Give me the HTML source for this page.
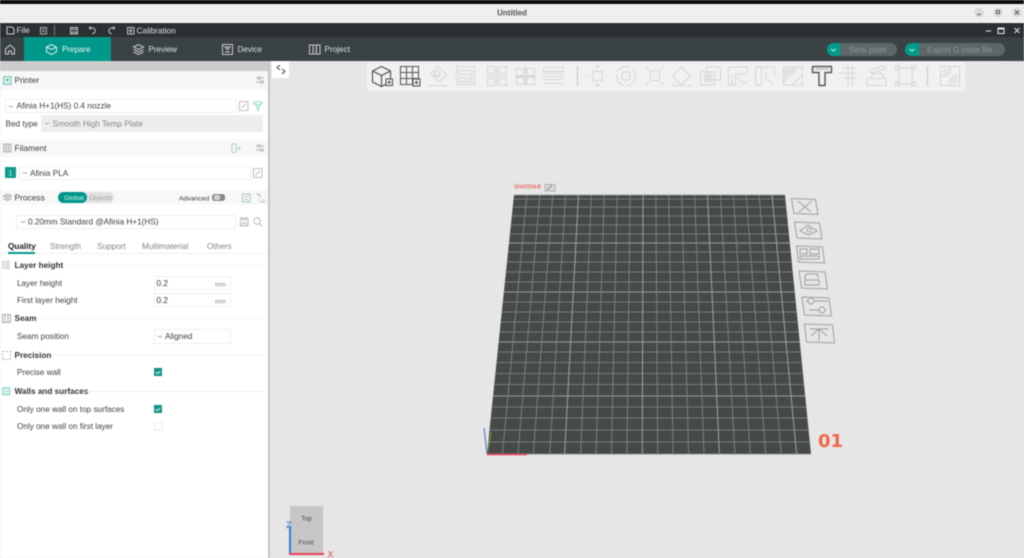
<!DOCTYPE html>
<html><head><meta charset="utf-8"><title>Untitled</title>
<style>
html,body{margin:0;padding:0;width:1024px;height:558px;overflow:hidden;background:#e6e6e6}
svg{position:absolute;left:0;top:0;display:block;filter:blur(.4px)}
text{font-family:"Liberation Sans",sans-serif;font-size:8.2px;fill:#404040}
.t{fill:#dce0e0}
.h{font-size:8.4px;fill:#3c3c3c}
.b{font-weight:bold;fill:#333}
.g{fill:#858585}
.l{fill:none;stroke:#d6d6d6;stroke-width:1}
.d{fill:none;stroke:#555;stroke-width:1}
.s{fill:none;stroke:#b0b0b0;stroke-width:1}
.m{fill:none;stroke:#9da2a2;stroke-width:1}
</style></head><body>
<svg width="1024" height="558" viewBox="0 0 1024 558" xmlns="http://www.w3.org/2000/svg">
<!-- window chrome -->
<rect width="1024" height="4" fill="#0a0a0a"/>
<rect y="4" width="1024" height="18" fill="#efefef"/>
<rect y="22" width="1024" height="1" fill="#fafafa"/>
<text x="512" y="15.5" text-anchor="middle" style="font-weight:bold;font-size:8px;fill:#555">Untitled</text>
<circle cx="979" cy="12.500" r="5" fill="#dcdcdc"/><circle cx="998" cy="12.500" r="5" fill="#dcdcdc"/><circle cx="1017" cy="12.500" r="5" fill="#dcdcdc"/>
<path d="M977 14.500h4M996.500 10.500h3v3h-3zM1015 10.500l4 4M1019 10.500l-4 4" fill="none" stroke="#555"/>
<rect y="23" width="1024" height="14" fill="#2b3133"/>
<rect y="37" width="1024" height="24" fill="#3a4244"/>
<rect x="24" y="37" width="87" height="24" fill="#00988a"/>
<rect y="61" width="270" height="10" fill="#cccccc"/>
<!-- menu -->
<path d="M7 27h5l2 2v5H7z" fill="none" stroke="#c9cdcd"/>
<text x="16.500" y="33" class="t">File</text>
<path d="M40.500 27.500h6v6.500h-6zM42 29.500h3M42 31.500h3" fill="none" stroke="#aab0b0"/>
<path d="M54.500 25v11" stroke="#757b7c"/>
<path d="M70.500 27.500h7v6.500h-7zM72 27.500v2h4v-2M72 34v-2h4v2" fill="none" stroke="#bcc0c0"/>
<path d="M89 28h4a2.700 2.700 0 1 1 -1 5.500M89 28l2-1.500M89 28l2 1.500" fill="none" stroke="#bcc0c0"/>
<path d="M115 28h-4a2.700 2.700 0 1 0 1 5.500M115 28l-2-1.500M115 28l-2 1.500" fill="none" stroke="#bcc0c0"/>
<path d="M127.500 27.500h6.500v6.500h-6.500zM130.700 27.500v6.500M128.500 30.700h4.500" fill="none" stroke="#bcc0c0"/>
<text x="136.500" y="33.300" class="t">Calibration</text>
<path d="M986 31h5M998 28h6v5.500h-6zM998 29h6M1014.500 28l5 5M1019.500 28l-5 5" fill="none" stroke="#e4e6e6"/>
<!-- tabs -->
<path d="M5.500 49l4.500-4 4.500 4v5h-3v-3h-3v3h-3z" fill="none" stroke="#c8cccc"/>
<path d="M46.500 47l5-2.500 5 2.500v5l-5 2.500-5-2.500zM46.500 47l5 2.500 5-2.500" fill="none" stroke="#d8f0ec"/>
<text x="62" y="52" class="t" style="fill:#e2f4f1;font-size:8px">Prepare</text>
<path d="M133.500 47l5-2.500 5 2.500-5 2.500zM133.500 49.500l5 2.500 5-2.500M133.500 52l5 2.500 5-2.500" fill="none" stroke="#c8cccc"/>
<text x="148.500" y="52" class="t" style="font-size:8px">Preview</text>
<path d="M222.500 44.500h10v10h-10zM225 47h5l-2.500 3zM225 52h5" fill="none" stroke="#c8cccc"/>
<text x="237.500" y="52" class="t" style="font-size:8px">Device</text>
<path d="M309.500 45h10.500v9h-10.500zM313 45v9M316.500 45v9M314.500 48h1M314.500 51h1" fill="none" stroke="#c8cccc"/>
<text x="324.500" y="52" class="t" style="font-size:8.200px">Project</text>
<!-- action buttons -->
<rect x="827" y="43" width="70" height="13" rx="6.500" fill="#5e6668"/>
<path d="M840 43h-6.500a6.500 6.500 0 0 0 0 13H840z" fill="#009b8a"/>
<path d="M831 49l2.500 2 2.500-2" fill="none" stroke="#d6f2ee"/>
<text x="849" y="52.500" style="fill:#8d9596;font-size:8.200px">Slice plate</text>
<rect x="905" y="43" width="100" height="13" rx="6.500" fill="#5e6668"/>
<path d="M919 43h-7.500a6.500 6.500 0 0 0 0 13H919z" fill="#009b8a"/>
<path d="M909.500 49l2.500 2 2.500-2" fill="none" stroke="#d6f2ee"/>
<text x="927" y="52.500" style="fill:#8d9596;font-size:8.200px">Export G-code file</text>
<!-- side panel -->
<rect y="71" width="268" height="487" fill="#fff"/>
<rect x="268" y="61" width="2" height="497" fill="#c4c4c4"/>
<rect x="272" y="61" width="17" height="17" fill="#fff"/>
<path d="M280 65l-3 2.500 3 2.500M282 69l3 2.500-3 2.500" fill="none" stroke="#444"/>
<rect y="71" width="268" height="19" fill="#f7f7f7"/>
<rect y="140" width="268" height="17" fill="#f8f8f8"/>
<rect y="190" width="268" height="15" fill="#f8f8f8"/>
<!-- printer -->
<path d="M3.500 76.500h7.500v8h-7.500z" fill="#d3efea" stroke="#7cc5ba"/><path d="M5.500 79h3.500l-1.700 2.500z" fill="#40a898"/>
<text x="14.500" y="83.200" class="h">Printer</text>
<path d="M256 78h8M256 82h8" class="s"/><circle cx="259" cy="78" r="1.300" fill="#f7f7f7" stroke="#b0b0b0"/><circle cx="262" cy="82" r="1.300" fill="#f7f7f7" stroke="#b0b0b0"/>
<rect x="5.500" y="99.500" width="231" height="13" fill="#fff" stroke="#eeeeee"/>
<path d="M9 106l2 1 2-1" fill="none" stroke="#aaa"/>
<text x="16.500" y="108.500">Afinia H+1(HS) 0.4 nozzle</text>
<path d="M239.500 101.500h8.500v9h-8.500zM241.500 108.500l4.500-5" fill="none" stroke="#c0c0c0"/>
<path d="M253.500 103q4.500-3 9 0l-3 2.500-1.500 5-1.500-5zM255.500 105q2.500-1.500 5 0" fill="none" stroke="#8ed5ca"/>
<text x="5.500" y="126.700">Bed type</text>
<rect x="41" y="115" width="222" height="17" fill="#eeeeee"/>
<path d="M45 123l2 1 2-1" fill="none" stroke="#aaa"/>
<text x="52.500" y="126.700" class="g">Smooth High Temp Plate</text>
<!-- filament -->
<path d="M3.500 144h7.500v8h-7.500zM6 144v8M8.500 144v8" fill="#e4e4e4" stroke="#b8b8b8"/>
<text x="14.500" y="151" class="h">Filament</text>
<path d="M232 144h4v8.500h-4zM237 148.500h4M239 146.500v4" fill="none" stroke="#b4cfcb"/>
<path d="M256 146h8M256 150h8" class="s"/><circle cx="259" cy="146" r="1.300" fill="#f8f8f8" stroke="#b0b0b0"/><circle cx="262" cy="150" r="1.300" fill="#f8f8f8" stroke="#b0b0b0"/>
<rect x="5" y="167" width="11" height="11" fill="#0f9c8d"/>
<text x="10.500" y="175.500" text-anchor="middle" style="fill:#e9f7f5;font-size:7px">1</text>
<rect x="19.500" y="166.500" width="231" height="13" fill="#fff" stroke="#eeeeee"/>
<path d="M23 172.500l2 1 2-1" fill="none" stroke="#aaa"/>
<text x="30" y="176">Afinia PLA</text>
<path d="M253.500 168.500h8.500v9h-8.500zM255.500 175.500l4.500-5" fill="none" stroke="#c0c0c0"/>
<!-- process -->
<path d="M3.500 196l4-2 4 2-4 2zM3.500 198.500l4 2 4-2" fill="#ddd" stroke="#b0b0b0"/>
<text x="14.500" y="200.500" class="h">Process</text>
<rect x="58" y="192" width="56" height="11" rx="5.500" fill="#e2e2e2"/>
<rect x="58" y="192" width="29" height="11" rx="5.500" fill="#00978a"/>
<text x="64" y="200" style="font-size:6.800px;fill:#d8f3ef">Global</text>
<text x="89" y="200" style="font-size:6.800px;fill:#a0a0a0">Objects</text>
<text x="179" y="200.300" style="font-size:6.800px;fill:#3c3c3c">Advanced</text>
<rect x="212" y="194" width="13" height="7" rx="2.500" fill="#8a8a8a"/><rect x="214" y="195" width="6" height="5" rx="1.500" fill="#d0d0d0"/>
<path d="M242.500 194h7.500v8h-7.500zM244.500 196.500h3.500M244.500 199.500h3.500" fill="none" stroke="#a8c4bf"/>
<path d="M256 194h3v3M261 202h3v-3M259 194l2 3M261 202l-2-3" fill="none" stroke="#b0c8c4"/>
<rect x="16.500" y="215.500" width="219" height="13" fill="#fff" stroke="#eeeeee"/>
<path d="M21 221.500l2 1 2-1" fill="none" stroke="#aaa"/>
<text x="28" y="224.700">0.20mm Standard @Afinia H+1(HS)</text>
<path d="M240.500 218h7.500v8h-7.500zM242.500 218v2h3.500v-2M242.500 226v-3h3.500v3" fill="none" stroke="#b8b8b8"/>
<circle cx="257" cy="221" r="3.300" fill="none" stroke="#b8b8b8"/><path d="M259.500 223.500l2.500 2.500" stroke="#b8b8b8"/>
<!-- param tabs -->
<text x="8" y="249" style="fill:#222;font-weight:bold;font-size:8.200px">Quality</text>
<text x="50" y="249" class="g">Strength</text>
<text x="97" y="249" class="g">Support</text>
<text x="142" y="249" class="g">Multimaterial</text>
<text x="207" y="249" class="g">Others</text>
<rect y="253" width="268" height="1" fill="#eeeeee"/>
<rect x="8" y="252" width="27" height="2" fill="#00978a"/>
<!-- Layer height -->
<rect x="2" y="261" width="8" height="8" fill="#d0d0d0"/><path d="M2 263h8M2 265h8M2 267h8M5 261v8" stroke="#f0f0f0" fill="none"/>
<text x="14.500" y="268" class="b">Layer height</text>
<rect x="65" y="265" width="199" height="1" fill="#f0f0f0"/>
<text x="17" y="285.800">Layer height</text>
<rect x="154.500" y="276.500" width="76" height="13" fill="#fff" stroke="#eeeeee"/>
<text x="156.500" y="285.800" style="fill:#333">0.2</text>
<text x="215" y="286.500" style="font-size:6.500px;fill:#888">mm</text>
<text x="17" y="302.800">First layer height</text>
<rect x="154.500" y="293.500" width="76" height="13" fill="#fff" stroke="#eeeeee"/>
<text x="156.500" y="302.800" style="fill:#333">0.2</text>
<text x="215" y="303.500" style="font-size:6.500px;fill:#888">mm</text>
<!-- Seam -->
<path d="M2.500 314.500h8v8h-8zM5 314.500v8M8 314.500v8" fill="none" stroke="#aaa"/>
<text x="14.500" y="321" class="b">Seam</text>
<rect x="38" y="318" width="226" height="1" fill="#f0f0f0"/>
<text x="17" y="339">Seam position</text>
<rect x="154.500" y="329.500" width="76" height="14" fill="#fff" stroke="#eeeeee"/>
<path d="M158 336l2 1 2-1" fill="none" stroke="#aaa"/>
<text x="165" y="339">Aligned</text>
<!-- Precision -->
<rect x="2.500" y="351.500" width="8" height="8" fill="none" stroke="#b0b0b0" stroke-dasharray="2 1.500"/>
<text x="14.500" y="358" class="b">Precision</text>
<rect x="52" y="355" width="212" height="1" fill="#f0f0f0"/>
<text x="17" y="375.200">Precise wall</text>
<rect x="154" y="368" width="8" height="8" fill="#0f9284"/><path d="M155.500 372l2 1.700 3-2.700" fill="none" stroke="#e2f5f2"/>
<!-- Walls -->
<rect x="2" y="387" width="8.500" height="8.500" fill="#a9dcd5"/><rect x="4.500" y="389.500" width="3.500" height="3.500" fill="none" stroke="#fff"/>
<text x="14.500" y="394" class="b">Walls and surfaces</text>
<rect x="86" y="391" width="178" height="1" fill="#f0f0f0"/>
<text x="17" y="412">Only one wall on top surfaces</text>
<rect x="154" y="405" width="8" height="8" fill="#0f9284"/><path d="M155.500 409l2 1.700 3-2.700" fill="none" stroke="#e2f5f2"/>
<text x="17" y="429">Only one wall on first layer</text>
<rect x="154.500" y="422.500" width="7.500" height="7.500" fill="#fff" stroke="#ececec"/>
<!-- toolbar -->
<rect x="367" y="62" width="598" height="29" fill="#f1f1f1"/>
<g>
<path d="M372.500 71l9-4.500 9 4.500v11l-9 4.500-9-4.500zM372.500 71l9 4.500 9-4.500M381.500 75.500v11" fill="none" stroke="#4c4c4c" stroke-width="1.100"/>
<rect x="386" y="79" width="6.500" height="6.500" fill="#f1f1f1" stroke="#4c4c4c"/><path d="M387.500 82.300h3.500M389.200 80.500v3.500" stroke="#4c4c4c" fill="none"/>
<path d="M400.500 66.500h18v18h-18zM406.500 66.500v18M412.500 66.500v18M400.500 72.500h18M400.500 78.500h18" class="d"/>
<rect x="413" y="79" width="7" height="7" fill="#f1f1f1" stroke="#4c4c4c"/><path d="M414.500 82.500h4M416.500 80.500v4" class="d"/>
<path d="M437.500 66.500l9 8-7 7.500-9-8zM428 85.500h19M434 72.500l5 4.500" class="l"/>
<circle cx="437" cy="74" r="3" class="l"/>
<path d="M456.500 66.500h18v18h-18zM459 70.500h13v4h-13zM459 78h6v4h-6zM468 78h4v4h-4z" class="l"/>
<path d="M487.500 66.500h7v7h-7zM499.500 66.500h7v7h-7zM487.500 78.500h7v7h-7zM499.500 78.500h7v7h-7zM497 66v20M487 76h20" class="l"/>
<path d="M516.500 68.500h7.500v7h-7.500zM527 68.500h7.500v7H527zM516.500 77.500h7.500v7h-7.500zM527 77.500h7.500v7H527zM525.500 66v20M515 76.500h21" class="l"/>
<path d="M543.500 67.500h20v4h-20zM543.500 73.500h20M543.500 76.500h20M543.500 79.500h20M543.500 83.500h20" class="l"/>
<path d="M577.500 66v20" stroke="#c6c6c6"/>
<path d="M593 71.500h9v9h-9zM597.500 66.500v2M597.500 83.500v2M588 76h2M605 76h2" class="l"/>
<path d="M595.500 67l2-1.500 2 1.500M595.500 84.500l2 1.500 2-1.500" class="l"/>
<circle cx="626" cy="76" r="9.500" class="l" stroke-dasharray="14 3"/><rect x="622" y="72" width="8" height="8" rx="2" class="l"/>
<path d="M650.500 70.500h9v10h-9zM646 66.500l3 3M664 66.500l-3 3M646 85l3-3M664 85l-3-3" class="l"/>
<path d="M672.500 76l9-9 9 9-9 9zM672 85.500h20" class="l"/>
<path d="M706.500 67h14v13h-14zM700.500 72h14v13h-14z" class="l"/><rect x="704" y="74" width="8" height="8" fill="#dedede"/>
<path d="M728.500 67h19v7h-12v11h-7zM732 74v11M738 78l6 6 3-3" class="l"/>
<path d="M755.500 67h6v18h-6zM761.500 67h13v9M766 72v8M769 80l4 4" class="l"/>
<path d="M783.500 67h19v18h-19z" class="l"/><path d="M784 68h15l-15 15z" fill="#e2e2e2"/><path d="M793 84l9-9" class="l"/>
<path d="M812.500 66.500h19v6h-6.500v13h-6v-13h-6.500z" fill="none" stroke="#555" stroke-width="1.400" stroke-linejoin="round"/>
<path d="M815 69h14" stroke="#aaa" fill="none"/>
<path d="M842 68h14M839 73h18M844 78h12M848 66v20M852 66v20" class="l"/>
<path d="M867 85.500h19v-7h-19zM871 78.500l2-5h9l2 5M869 70l15-4 2 3-15 4z" class="l"/>
<path d="M898 68h15M898 84h15M898 68q2 8 0 16M913 68q-2 8 0 16" class="l"/>
<rect x="895.500" y="65.500" width="4" height="4" class="l"/><rect x="911.500" y="65.500" width="4" height="4" class="l"/><rect x="895.500" y="82" width="4" height="4" class="l"/><rect x="911.500" y="82" width="4" height="4" class="l"/>
<path d="M927.500 66v20" stroke="#c6c6c6"/>
<path d="M940.500 66.500h19v19h-19zM950 66.500v8M950 78v7.500M940.500 76h7M952 76h7.500" class="l"/>
<path d="M944 70h4v4h-4zM952 78h4v4h-4z" class="l"/>
</g>
<!-- plate -->
<defs><clipPath id="pl"><polygon points="514,195 785,195 811,454 487,454"/></clipPath></defs>
<polygon points="514,195 785,195 811,454 487,454" fill="#454948"/>
<g clip-path="url(#pl)">
<path d="M480 199H820M480 207H820M480 216H820M480 225H820M480 234H820M480 252H820M480 262H820M480 272H820M480 282H820M480 302H820M480 312H820M480 322H820M480 332H820M480 352H820M480 362.500H820M480 373.500H820M480 384.500H820M480 407H820M480 418H820M480 430H820M480 442H820" stroke="#767b7a" stroke-width="1" fill="none"/>
<path d="M480 243H820M480 292H820M480 342H820M480 396H820" stroke="#989c9b" stroke-width="1" fill="none"/>
<path d="M502.400 454L526.900 195M517.900 454L539.800 195M533.300 454L552.700 195M549.700 454L565.600 195M580.600 454L591.400 195M596 454L604.300 195M611.400 454L617.200 195M626.900 454L630.100 195M657.700 454L655.900 195M673.100 454L668.800 195M688.600 454L681.700 195M704 454L694.600 195M734.900 454L720.400 195M750.300 454L733.300 195M765.700 454L746.200 195M781.100 454L759.100 195" stroke="#7c8180" stroke-width="1" fill="none"/>
<path d="M564.600 454L578.500 195M642.300 454L643 195M719.400 454L707.500 195M796.600 454L772 195" stroke="#a0a4a3" stroke-width="1" fill="none"/>
</g>
<path d="M514 195H785" stroke="#9a9e9d" fill="none"/>
<path d="M487 454H811" stroke="#8a8e8d" fill="none"/>
<path d="M487 454l4-22" stroke="#7aa048" fill="none"/>
<path d="M484 428l3 26" stroke="#3a6cc8" fill="none"/>
<path d="M487 454.500h40" stroke="#ee3b5a" stroke-width="1.500" fill="none"/>
<text x="514.500" y="188.500" style="font-size:6px;font-weight:bold;fill:#e8604c" textLength="26">Untitled</text>
<path d="M545 184.500h10v6.500h-10z" fill="#dadada" stroke="#b0b0b0"/><path d="M547 190l5-4.500" stroke="#888" fill="none"/>
<text x="818" y="447" style="font-size:18px;font-weight:bold;fill:#f0664a;font-family:'DejaVu Sans',sans-serif" textLength="25" lengthAdjust="spacingAndGlyphs">01</text>
<!-- plate side buttons -->
<path d="M791.500 198.500l24 1 2.500 15-24-1zM798 201l13 11M812 201l-13 11" class="m"/>
<path d="M794.500 222l25 1 2.500 16-25-1zM800 231l8-6 9 6-8 4z" class="m"/><circle cx="809" cy="230" r="2" class="m"/>
<path d="M796.500 246l26 1 2 16-26-1zM800 249h7v5h-7zM810 249h9v5h-9zM800 256h19v3h-19z" class="m"/>
<path d="M799 271l26 1 2.500 17-26-1zM805 280v-4q0-2 3-2h7q3 0 3 2v2M805 280h14v5h-14z" class="m"/>
<path d="M802 297l27 1 2.500 18-27-1zM806 301h22M809 310h17" class="m"/><circle cx="811" cy="301" r="3" fill="#e6e6e6" stroke="#9da2a2"/><circle cx="822" cy="310" r="3" fill="#e6e6e6" stroke="#9da2a2"/>
<path d="M804.500 324l28 1 2 18-28-1zM810 329h18M819 341v-11M811 336l8-7 8 7" class="m"/>
<!-- nav cube -->
<rect x="290" y="506" width="33" height="49" fill="#c6c6c6"/>
<text x="306.500" y="520.500" text-anchor="middle" style="font-size:6.500px;fill:#444">Top</text>
<text x="306" y="544.500" text-anchor="middle" style="font-size:6.500px;fill:#444">Front</text>
<rect x="289" y="526" width="2" height="28" fill="#2f7fe0"/>
<rect x="289" y="553" width="35" height="2" fill="#e84058"/>
<text x="286" y="528" style="font-size:9px;fill:#2f6fc8">Z</text>
<text x="327.500" y="557.500" style="font-size:9px;fill:#e84058">X</text>
</svg>
</body></html>
